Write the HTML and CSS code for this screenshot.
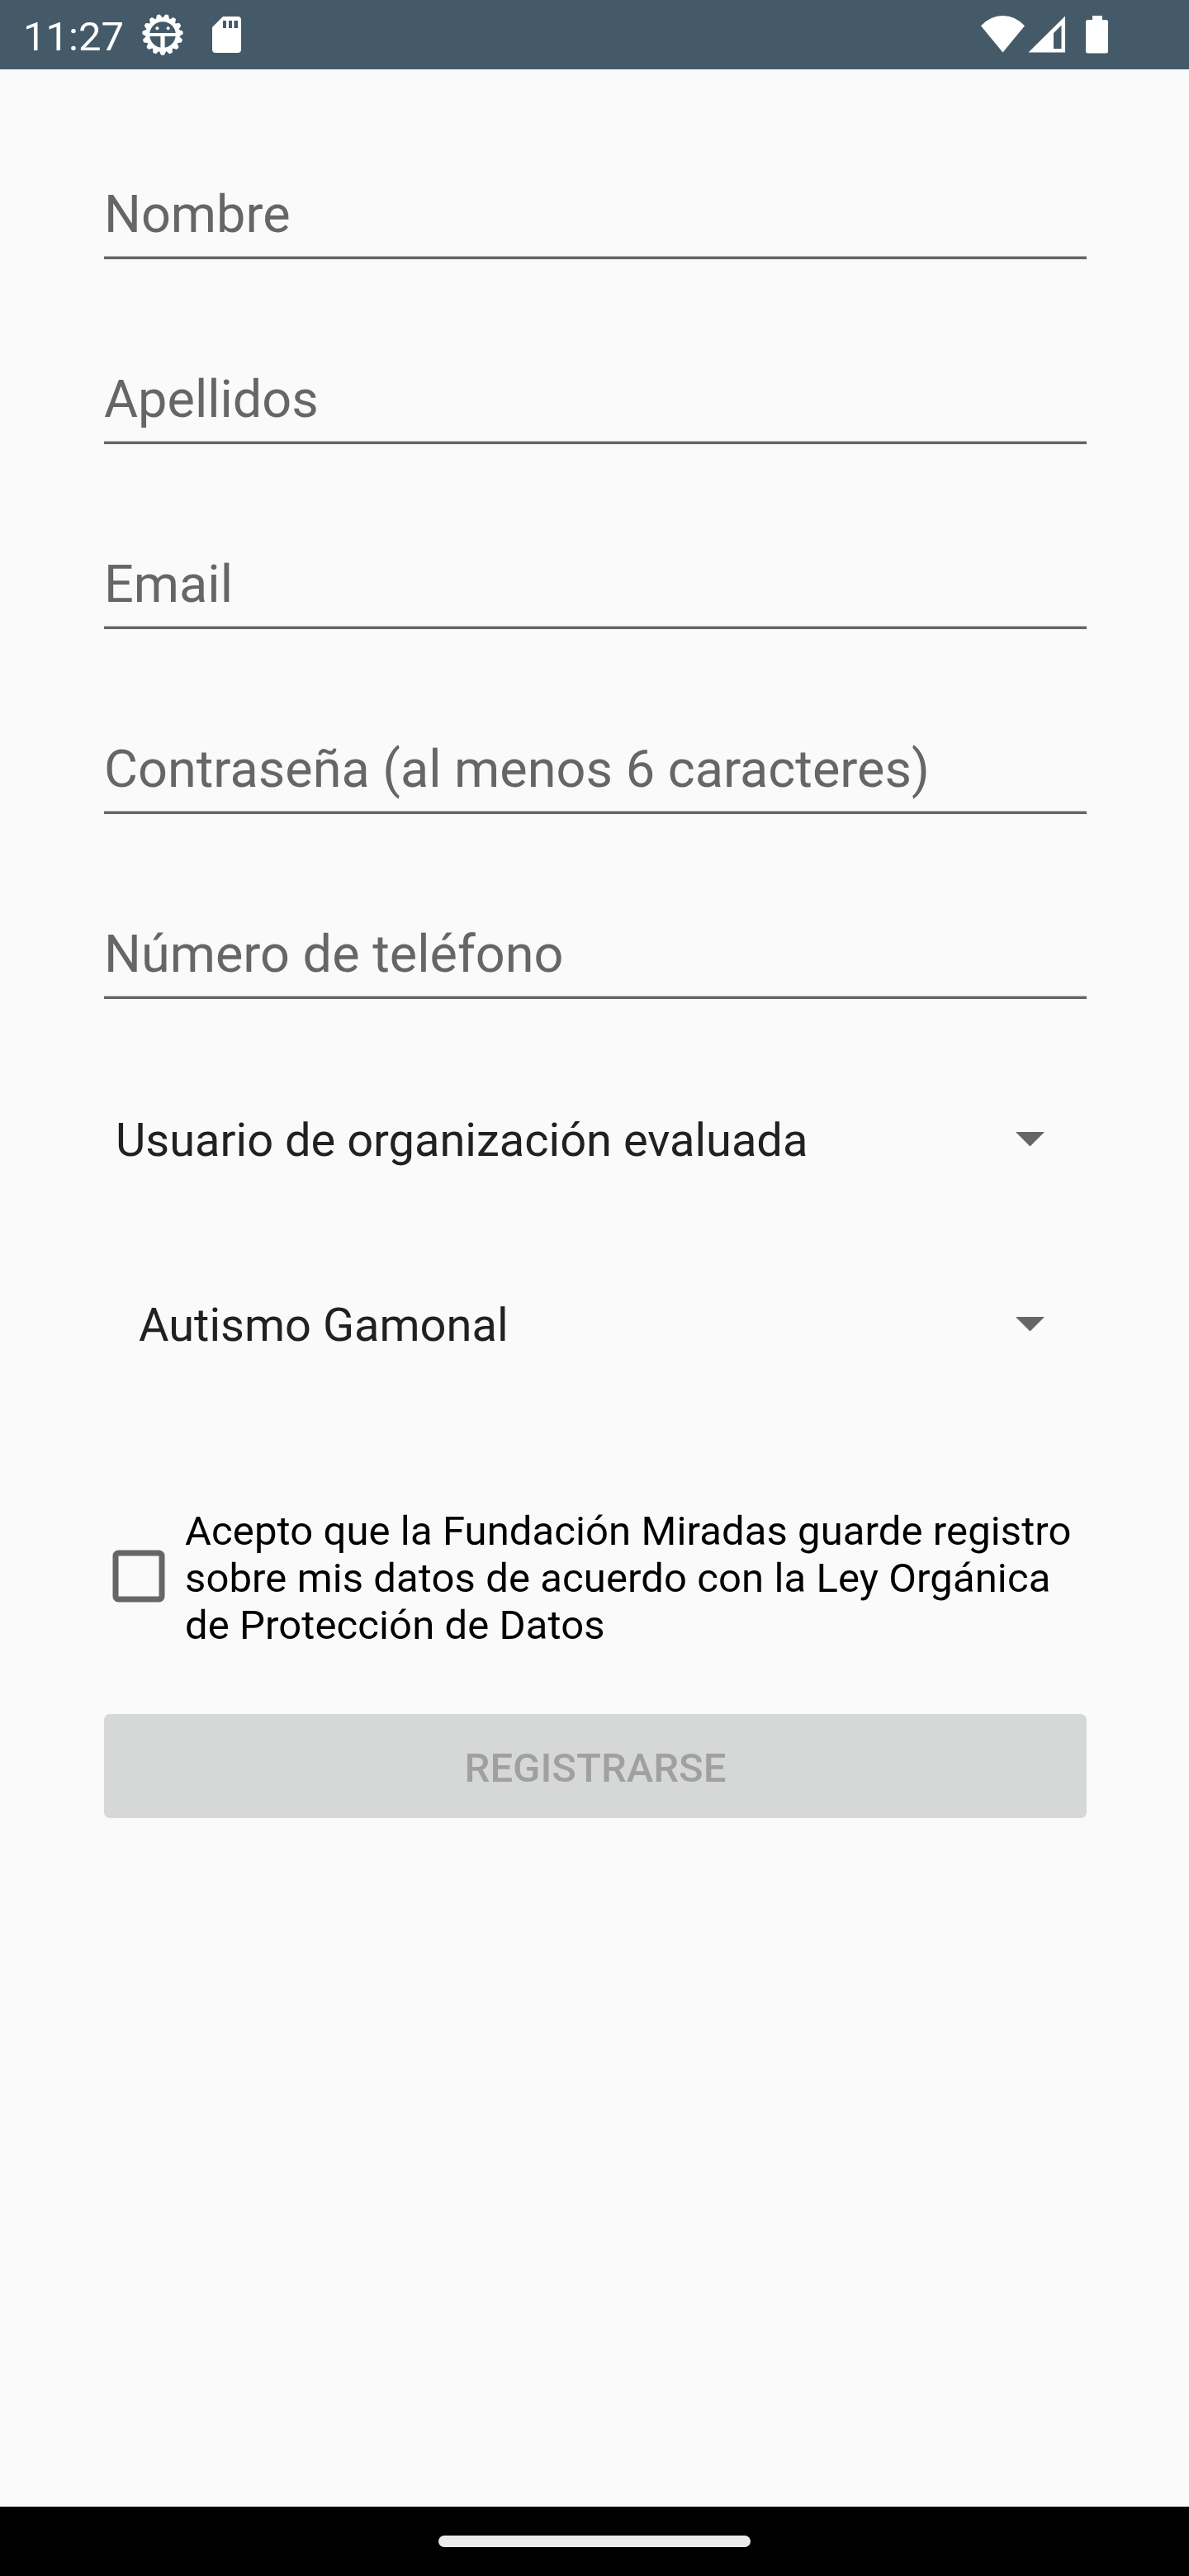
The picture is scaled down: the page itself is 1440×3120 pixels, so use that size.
FILE: index.html
```html
<!DOCTYPE html>
<html lang="es">
<head>
<meta charset="utf-8">
<title>Registro</title>
<link rel="stylesheet" href="styles.css">
</head>
<body>
<div class="screen">
  <header class="status">
    <span class="clock">11:27</span>
    <svg class="gear" width="50" height="50" viewBox="-25 -25 50 50" aria-hidden="true">
      <g fill="#fff" stroke="#fff" stroke-width="2" stroke-linejoin="round">
        <path d="M-3.500 19L-1.200 23.700H1.200L3.500 19Z"/>
        <path d="M-3.500 19L-1.200 23.700H1.200L3.500 19Z" transform="rotate(24)"/>
        <path d="M-3.500 19L-1.200 23.700H1.200L3.500 19Z" transform="rotate(48)"/>
        <path d="M-3.500 19L-1.200 23.700H1.200L3.500 19Z" transform="rotate(72)"/>
        <path d="M-3.500 19L-1.200 23.700H1.200L3.500 19Z" transform="rotate(96)"/>
        <path d="M-3.500 19L-1.200 23.700H1.200L3.500 19Z" transform="rotate(120)"/>
        <path d="M-3.500 19L-1.200 23.700H1.200L3.500 19Z" transform="rotate(144)"/>
        <path d="M-3.500 19L-1.200 23.700H1.200L3.500 19Z" transform="rotate(168)"/>
        <path d="M-3.500 19L-1.200 23.700H1.200L3.500 19Z" transform="rotate(192)"/>
        <path d="M-3.500 19L-1.200 23.700H1.200L3.500 19Z" transform="rotate(216)"/>
        <path d="M-3.500 19L-1.200 23.700H1.200L3.500 19Z" transform="rotate(240)"/>
        <path d="M-3.500 19L-1.200 23.700H1.200L3.500 19Z" transform="rotate(264)"/>
        <path d="M-3.500 19L-1.200 23.700H1.200L3.500 19Z" transform="rotate(288)"/>
        <path d="M-3.500 19L-1.200 23.700H1.200L3.500 19Z" transform="rotate(312)"/>
        <path d="M-3.500 19L-1.200 23.700H1.200L3.500 19Z" transform="rotate(336)"/>
      </g>
      <circle r="18.200" fill="none" stroke="#fff" stroke-width="4.800"/>
      <path d="M-17 0H17" stroke="#fff" stroke-width="4.200"/>
      <path d="M0 0V17" stroke="#fff" stroke-width="5.200"/>
      <circle cx="-6.600" cy="-7.800" r="2" fill="#fff"/><circle cx="6.600" cy="-7.800" r="2" fill="#fff"/>
    </svg>
    <svg class="card" width="35" height="44" viewBox="0 0 35 44" aria-hidden="true">
      <path fill="#fff" fill-rule="evenodd" d="M13 0H31Q35 0 35 4V40Q35 44 31 44H4Q0 44 0 40V13ZM13 5V14H17V5ZM20 5V14H24V5ZM26.500 5V14H31V5Z"/>
    </svg>
    <svg class="signals" width="156" height="46" viewBox="0 0 156 46" aria-hidden="true">
      <g fill="#fff">
        <path d="M0 12.300Q11.500 0 26.500 0T53 12.300L26.500 44.500Z"/>
        <path fill-rule="evenodd" d="M102 .5V44.500H57.500ZM97.500 11.500L88 21V40H97.500Z"/>
        <path d="M135 0H147V5H151.500Q154 5 154 7.500V43Q154 45.500 151.500 45.500H129.500Q127 45.500 127 43V7.500Q127 5 129.500 5H135Z"/>
      </g>
    </svg>
  </header>
  <main class="form">
    <div class="field">Nombre</div>
    <div class="field">Apellidos</div>
    <div class="field">Email</div>
    <div class="field">Contraseña (al menos 6 caracteres)</div>
    <div class="field">Número de teléfono</div>
    <div class="spinners">
      <div class="spinner"><span class="choice">Usuario de organización evaluada</span><svg class="arrow" viewBox="0 0 35 17.500"><path d="M0 0H35L17.500 17.500Z"/></svg></div>
      <div class="spinner nested"><span class="choice">Autismo Gamonal</span><svg class="arrow" viewBox="0 0 35 17.500"><path d="M0 0H35L17.500 17.500Z"/></svg></div>
    </div>
    <div class="consent">
      <svg class="box" width="64" height="64" viewBox="0 0 64 64"><rect x="4" y="4" width="56" height="56" rx="3.500" fill="none" stroke="#666" stroke-width="7"/></svg>
      <p class="terms">Acepto que la Fundación Miradas guarde registro<br>sobre mis datos de acuerdo con la Ley Orgánica<br>de Protección de Datos</p>
    </div>
    <button class="submit" disabled>REGISTRARSE</button>
  </main>
  <footer class="nav"><div class="pill"></div></footer>
</div>
</body>
</html>
```
FILE: styles.css
```css
* { box-sizing: border-box; }
body { margin: 0; background: #fafafa; font-family: Roboto, sans-serif; }
.screen { width: 1440px; height: 3120px; display: flex; flex-direction: column; }
.status { height: 84px; background: #455a68; color: #fff; display: flex; align-items: flex-start; padding: 0 96px 0 28px; }
.clock { font-size: 49px; line-height: 57px; width: 144px; margin-top: 16px; }
.gear { margin-top: 17px; }
.card { margin: 20px 0 0 35px; }
.signals { margin: 19px 0 0 auto; }
.form { flex: 1; padding: 56px 124px 0 126px; display: flex; flex-direction: column; }
.field { height: 174px; margin-bottom: 50px; padding-top: 83px; font-size: 63px; line-height: 74px; color: #666; background: linear-gradient(#b0b0b0 1px, #666 1px) bottom / 100% 4px no-repeat; }
.spinners { margin-top: 8px; }
.spinner { height: 224px; display: flex; align-items: center; justify-content: space-between; padding: 0 51px 0 14px; font-size: 56px; line-height: 66px; color: #212121; }
.nested { padding-left: 42px; }
.choice { padding-top: 2px; }
.arrow { width: 35px; height: 17.500px; fill: #666; }
.consent { display: flex; gap: 24px; margin-top: 110px; padding-left: 10px; }
.box { margin-top: 51px; }
.terms { margin: 0; font-size: 49px; line-height: 57px; letter-spacing: .1px; color: #000; white-space: nowrap; }
.submit { height: 126px; margin-top: 79px; padding: 4px 0 0; border: 0; border-radius: 7px; background: #d6d8d7; color: #a0a0a0; font: 500 49px/57px Roboto, sans-serif; }
.nav { height: 84px; background: #000; padding-top: 35px; display: flex; justify-content: center; }
.pill { width: 378px; height: 14px; border-radius: 7px; background: #ebebeb; }
```
